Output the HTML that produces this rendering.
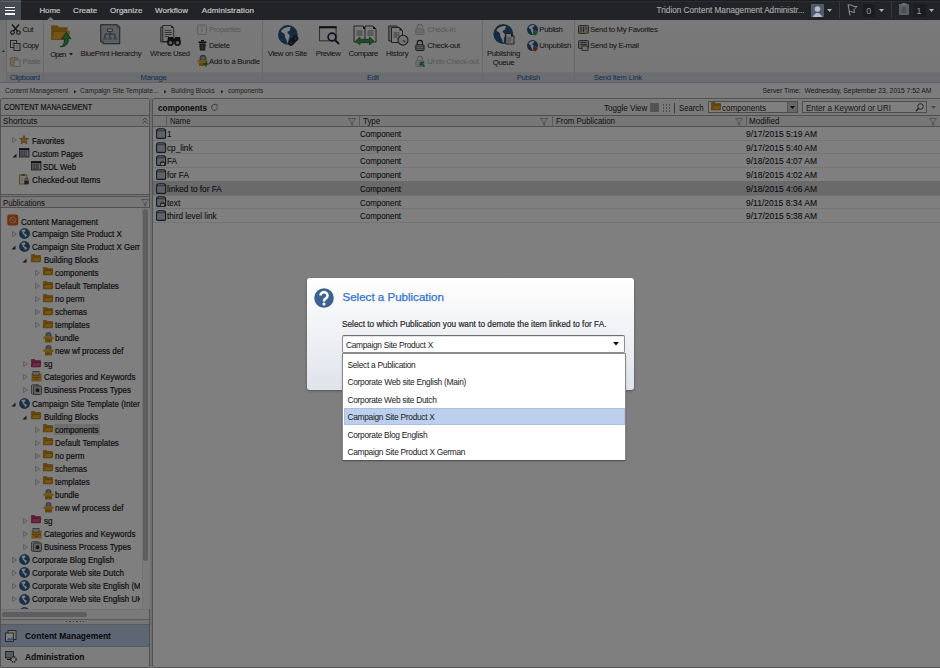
<!DOCTYPE html>
<html><head><meta charset="utf-8">
<style>
*{margin:0;padding:0;box-sizing:border-box}
html,body{width:940px;height:668px;overflow:hidden;background:#fff;font-family:"Liberation Sans",sans-serif;color:#222}
.a{position:absolute;white-space:nowrap}
svg.a{overflow:visible}
#top{left:0;top:0;width:940px;height:20px;background:#43464c}
</style></head><body>
<div class="a" style="left:0px;top:20px;width:940px;height:52px;background:linear-gradient(#f3f3f3,#eeeeee)"></div>
<div class="a" style="left:0px;top:72px;width:940px;height:10px;background:#d6dbe1;border-top:1px solid #dde1e6"></div>
<div class="a" style="left:0px;top:82px;width:940px;height:1px;background:#bfc3c8"></div>
<div class="a" style="left:0px;top:20px;width:7.3px;height:62px;background:#e6e6e6;border-right:1px solid #cfd2d6"></div>
<svg class="a" style="left:2px;top:50.3px" width="3" height="2" viewBox="0 0 3 2"><path d="M0 2 L1.5 0 L3 2z" fill="#555"/></svg>
<div class="a" style="left:43.3px;top:20px;width:1px;height:62px;background:#cdd1d6"></div>
<div class="a" style="left:262.2px;top:20px;width:1px;height:62px;background:#cdd1d6"></div>
<div class="a" style="left:482.4px;top:20px;width:1px;height:62px;background:#cdd1d6"></div>
<div class="a" style="left:573.9px;top:20px;width:1px;height:62px;background:#cdd1d6"></div>
<div class="a" style="left:10px;top:71.70px;line-height:12px;font-size:7.6px;color:#2a5d9f;font-weight:normal;letter-spacing:-0.316px;">Clipboard</div>
<div class="a" style="left:140.6px;top:71.70px;line-height:12px;font-size:7.6px;color:#2a5d9f;font-weight:normal;letter-spacing:-0.252px;">Manage</div>
<div class="a" style="left:367px;top:71.70px;line-height:12px;font-size:7.6px;color:#2a5d9f;font-weight:normal;letter-spacing:-0.365px;">Edit</div>
<div class="a" style="left:516.7px;top:71.70px;line-height:12px;font-size:7.6px;color:#2a5d9f;font-weight:normal;letter-spacing:-0.238px;">Publish</div>
<div class="a" style="left:593.8px;top:71.70px;line-height:12px;font-size:7.6px;color:#2a5d9f;font-weight:normal;letter-spacing:-0.192px;">Send Item Link</div>
<svg class="a" style="left:10px;top:24px" width="11" height="11" viewBox="0 0 11 11"><circle cx="2.5" cy="8.5" r="1.8" fill="none" stroke="#222" stroke-width="1.1"/><circle cx="8.5" cy="8.5" r="1.8" fill="none" stroke="#222" stroke-width="1.1"/><path d="M3.5 7 L9 0.5 M7.5 7 L2 0.5" stroke="#222" stroke-width="1.2"/></svg>
<div class="a" style="left:22.6px;top:24.30px;line-height:12px;font-size:7.8px;color:#1e1e1e;font-weight:normal;letter-spacing:-0.669px;">Cut</div>
<svg class="a" style="left:10px;top:40px" width="11" height="11" viewBox="0 0 11 11"><rect x="0.5" y="0.5" width="6" height="7" fill="#fff" stroke="#333" stroke-width="0.9"/><rect x="4" y="3.5" width="6" height="7" fill="#fff" stroke="#333" stroke-width="0.9"/><path d="M2 3h3M2 5h1.5M5.5 6h3M5.5 8h3" stroke="#555" stroke-width="0.6"/></svg>
<div class="a" style="left:22.6px;top:39.90px;line-height:12px;font-size:7.8px;color:#1e1e1e;font-weight:normal;letter-spacing:-0.603px;">Copy</div>
<svg class="a" style="left:10px;top:56px" width="11" height="11" viewBox="0 0 11 11"><rect x="0.5" y="1.5" width="7" height="8.5" rx="1" fill="#e8cfa0" stroke="#b9a37a" stroke-width="0.8"/><rect x="4" y="4" width="6" height="6.5" fill="#f4f4f4" stroke="#aaa" stroke-width="0.8"/></svg>
<div class="a" style="left:22.6px;top:55.90px;line-height:12px;font-size:7.8px;color:#b0b2b5;font-weight:normal;letter-spacing:-0.486px;">Paste</div>
<svg class="a" style="left:50.5px;top:24.5px" width="22" height="22" viewBox="0 0 22 22"><g transform="scale(0.5)"><path d="M1 1.5 h12 l3.5 3.5 h16 v24 h-31.5z" fill="#c98b1c" stroke="#9a6810" stroke-width="0.8"/><path d="M1 29 l5 -16 h32 l-5 16z" fill="#e6a52c" stroke="#9a6810" stroke-width="0.8"/><path d="M18 43.5 C26 42.5 27 35 26.5 27.5 L21 27.5 L30.5 14.5 L40 27.5 L34.5 27.5 C35.5 37 31 43.5 18 43.5 z" fill="#3a9a4c" stroke="#17602a" stroke-width="1.6"/></g></svg>
<div class="a" style="left:50.3px;top:49.00px;line-height:12px;font-size:7.8px;color:#1e1e1e;font-weight:normal;letter-spacing:-1.027px;">Open</div>
<svg class="a" style="left:68.5px;top:53px" width="4" height="3" viewBox="0 0 4 3"><path d="M0 0 L4 0 L2 2.5z" fill="#333"/></svg>
<svg class="a" style="left:100.3px;top:24px" width="22" height="21" viewBox="0 0 22 21"><g transform="scale(0.5)"><path d="M1.5 1.5 h33 l5 5 v33 h-33 l-5 -5z" fill="#b7c0cc" stroke="#2a2f36" stroke-width="1.8"/><path d="M34.5 1.5 v5 h5z" fill="#eee" stroke="#2a2f36" stroke-width="1.2"/><path d="M1.5 34.5 h5 v5z" fill="#eee" stroke="#2a2f36" stroke-width="1.2"/><rect x="15" y="10" width="10" height="5" fill="#f2f2f2" stroke="#2a2f36" stroke-width="1.3"/><path d="M20 15 v5 M10 26 v-6 h20 v6 M20 20 v6" fill="none" stroke="#2a2f36" stroke-width="1.3"/><path d="M7 30 l3 -4 l3 4z M17 30 l3 -4 l3 4z M27 30 l3 -4 l3 4z" fill="#f2f2f2" stroke="#2a2f36" stroke-width="1.2"/></g></svg>
<div class="a" style="left:80.6px;top:47.90px;line-height:12px;font-size:7.8px;color:#1e1e1e;font-weight:normal;letter-spacing:-0.333px;">BluePrint Hierarchy</div>
<svg class="a" style="left:160px;top:24.5px" width="22" height="22" viewBox="0 0 22 22"><g transform="scale(0.5)"><path d="M1.5 4 h17 l6 6 v24 h-23z" fill="#c8c8c8" stroke="#333" stroke-width="1.6"/><path d="M5.5 1 h17 l5 5 v27 h-22z" fill="#ececec" stroke="#333" stroke-width="1.6"/><path d="M22.5 1 v5 h5z" fill="#222"/><path d="M9.5 11h13M9.5 15h14M9.5 19h14M9.5 23h8" stroke="#444" stroke-width="1.6"/><path d="M16 24 h10 l1 8 h-12z M30 24 h10 l1 8 h-12z" fill="#222"/><circle cx="21" cy="35" r="6.8" fill="#222"/><circle cx="35" cy="35" r="6.8" fill="#222"/><circle cx="21" cy="35.5" r="3.6" fill="#bbb"/><circle cx="35" cy="35.5" r="3.6" fill="#bbb"/><rect x="25" y="27" width="6" height="6" fill="#222"/></g></svg>
<div class="a" style="left:150px;top:47.80px;line-height:12px;font-size:7.8px;color:#1e1e1e;font-weight:normal;letter-spacing:-0.372px;">Where Used</div>
<svg class="a" style="left:197px;top:24px" width="10" height="11" viewBox="0 0 10 11"><rect x="0.5" y="1" width="9" height="9.5" rx="1" fill="#eee" stroke="#b5b9be" stroke-width="0.9"/><rect x="3" y="0.3" width="4" height="2" fill="#ccc"/><path d="M5 4v4" stroke="#b5b9be" stroke-width="1"/></svg>
<div class="a" style="left:209px;top:24.30px;line-height:12px;font-size:7.8px;color:#b0b2b5;font-weight:normal;letter-spacing:-0.394px;">Properties</div>
<svg class="a" style="left:198px;top:40px" width="9" height="11" viewBox="0 0 9 11"><rect x="0.5" y="1.5" width="8" height="1.5" fill="#222"/><rect x="3" y="0" width="3" height="1.5" fill="#222"/><path d="M1.3 3.5 h6.4 l-0.6 7 h-5.2z" fill="#222"/><path d="M3 4.5v5M4.5 4.5v5M6 4.5v5" stroke="#aaa" stroke-width="0.5"/></svg>
<div class="a" style="left:209px;top:39.90px;line-height:12px;font-size:7.8px;color:#1e1e1e;font-weight:normal;letter-spacing:-0.309px;">Delete</div>
<svg class="a" style="left:196.5px;top:55px" width="12" height="12" viewBox="0 0 12 12"><g transform="scale(0.5)"><path d="M6 10 v-5 a6 4.5 0 0 1 12 0 v5" fill="#8c8c8c" stroke="#444" stroke-width="1.4"/><path d="M9 5h6M9 7.5h6" stroke="#ddd" stroke-width="0.9"/><rect x="1" y="10" width="20" height="5" rx="1" fill="#e6a52c"/><rect x="4" y="15" width="14" height="7" fill="#d4951f"/><path d="M4 18h14" stroke="#a06d12" stroke-width="1"/><path d="M18 13 v10 M13 18 h10" stroke="#128a3a" stroke-width="3"/></g></svg>
<div class="a" style="left:209px;top:55.60px;line-height:12px;font-size:7.8px;color:#1e1e1e;font-weight:normal;letter-spacing:-0.322px;">Add to a Bundle</div>
<svg class="a" style="left:278px;top:24.8px" width="22" height="21" viewBox="0 0 22 21"><circle cx="9.9" cy="9.9" r="9.85" fill="#2b5784"/><path d="M3 6.5 C4.5 3 9 1.5 13 2 C12.5 3 11.5 4 12 5.5 C10.5 6 9 6.5 9.5 8 L11.5 10 C12 11.5 11 13 10.5 14.5 L10.5 18.5 L9.5 18.5 C9 16.5 8.5 14.5 7.5 13 C6.5 11.5 7 10 6.5 9 C5.5 8 4 7.5 3 6.5 Z" fill="#fff"/><g transform="rotate(-45 15.5 15.5)" fill="none" stroke="#222" stroke-width="1.5"><rect x="10" y="13.5" width="6" height="4" rx="2"/><rect x="14.5" y="13.5" width="6" height="4" rx="2"/></g></svg>
<div class="a" style="left:267.7px;top:47.80px;line-height:12px;font-size:7.8px;color:#1e1e1e;font-weight:normal;letter-spacing:-0.329px;">View on Site</div>
<svg class="a" style="left:318.5px;top:25.5px" width="22" height="21" viewBox="0 0 22 21"><rect x="0.6" y="0.8" width="16.5" height="14" fill="#f0f0f0" stroke="#444" stroke-width="0.9"/><rect x="0.2" y="0.3" width="17.3" height="2" fill="#222"/><circle cx="13" cy="11" r="3.9" fill="#f0f0f0" stroke="#1c2340" stroke-width="1.7"/><path d="M15.8 13.8 L20 18" stroke="#1c2340" stroke-width="1.9"/></svg>
<div class="a" style="left:315.8px;top:47.80px;line-height:12px;font-size:7.8px;color:#1e1e1e;font-weight:normal;letter-spacing:-0.440px;">Preview</div>
<svg class="a" style="left:352.5px;top:24.8px" width="24" height="21" viewBox="0 0 24 21"><path d="M1 1 h9 l3 3 v13 h-12z" fill="#f4f4f4" stroke="#333" stroke-width="0.9"/><path d="M10 1 v3 h3z" fill="#222"/><path d="M12 1 h8 l3 3 v13 h-11z" fill="#f4f4f4" stroke="#333" stroke-width="0.9"/><path d="M20 1 v3 h3z" fill="#222"/><path d="M3.5 6h6M3.5 8h6M3.5 10h6M14.5 6h6M14.5 8h6M14.5 10h6" stroke="#555" stroke-width="0.8"/><path d="M2.5 16 l4.5 -4 v2.3 h9.5 v-2.3 l4.5 4 l-4.5 4 v-2.3 h-9.5 v2.3z" fill="#3a9a4c" stroke="#1d6a30" stroke-width="0.7"/></svg>
<div class="a" style="left:348.5px;top:47.80px;line-height:12px;font-size:7.8px;color:#1e1e1e;font-weight:normal;letter-spacing:-0.380px;">Compare</div>
<svg class="a" style="left:388px;top:24.8px" width="22" height="21" viewBox="0 0 22 21"><path d="M0.8 1 h8 l3 3 v12 h-11z" fill="#ccc" stroke="#333" stroke-width="0.9"/><path d="M3.5 2.5 h8 l3 3 v12 h-11z" fill="#f4f4f4" stroke="#333" stroke-width="0.9"/><path d="M11.5 2.5 v3 h3z" fill="#222"/><path d="M5.5 8h6M5.5 10h6M5.5 12h4" stroke="#555" stroke-width="0.8"/><circle cx="15" cy="15.2" r="5" fill="#e4e4e4" stroke="#333" stroke-width="1.1"/><path d="M15 15.2 L17.3 17" stroke="#c0392b" stroke-width="1.2"/></svg>
<div class="a" style="left:386px;top:47.80px;line-height:12px;font-size:7.8px;color:#1e1e1e;font-weight:normal;letter-spacing:-0.278px;">History</div>
<svg class="a" style="left:415.4px;top:24px" width="11" height="11" viewBox="0 0 11 11"><path d="M2.3 4.8 v-1.8 a2.6 2.6 0 0 1 5.2 0 v0.6" fill="none" stroke="#b0b4b8" stroke-width="1.1"/><rect x="0.8" y="4.8" width="8.2" height="5.7" rx="0.8" fill="#e2e2e2" stroke="#b0b4b8" stroke-width="0.9"/><path d="M1.5 6.8h6.8M1.5 8.6h6.8" stroke="#b0b4b8" stroke-width="0.5"/></svg>
<div class="a" style="left:427.2px;top:24.35px;line-height:12px;font-size:7.8px;color:#b0b2b5;font-weight:normal;letter-spacing:-0.339px;">Check-in</div>
<svg class="a" style="left:415.4px;top:40px" width="11" height="11" viewBox="0 0 11 11"><path d="M2.3 4.8 v-1.8 a2.6 2.6 0 0 1 5.2 0 v1.8" fill="none" stroke="#1e1e1e" stroke-width="1.1"/><rect x="0.8" y="4.8" width="8.2" height="5.7" rx="0.8" fill="#c8c8c8" stroke="#1e1e1e" stroke-width="0.9"/><path d="M1.5 6.8h6.8M1.5 8.6h6.8" stroke="#1e1e1e" stroke-width="0.5"/></svg>
<div class="a" style="left:427.2px;top:40.10px;line-height:12px;font-size:7.8px;color:#1e1e1e;font-weight:normal;letter-spacing:-0.306px;">Check-out</div>
<svg class="a" style="left:415.4px;top:56px" width="11" height="11" viewBox="0 0 11 11"><path d="M2.3 4.8 v-1.8 a2.6 2.6 0 0 1 5.2 0 v1.8" fill="none" stroke="#b0b4b8" stroke-width="1.1"/><rect x="0.8" y="4.8" width="8.2" height="5.7" rx="0.8" fill="#e2e2e2" stroke="#b0b4b8" stroke-width="0.9"/><path d="M1.5 6.8h6.8M1.5 8.6h6.8" stroke="#b0b4b8" stroke-width="0.5"/><path d="M5.5 6.5 L9.5 10.5 M5.5 6.5 v3.5 M5.5 6.5 h3.5" stroke="#2e8a4e" stroke-width="1.6" fill="none"/></svg>
<div class="a" style="left:427.2px;top:55.60px;line-height:12px;font-size:7.8px;color:#b0b2b5;font-weight:normal;letter-spacing:-0.328px;">Undo Check-out</div>
<svg class="a" style="left:493.3px;top:24.3px" width="22" height="21" viewBox="0 0 22 21"><circle cx="10.3" cy="10" r="9.9" fill="#2b5784"/><g transform="translate(0.3 0)"><path d="M3 6.5 C4.5 3 9 1.5 13 2 C12.5 3 11.5 4 12 5.5 C10.5 6 9 6.5 9.5 8 L11.5 10 C12 11.5 11 13 10.5 14.5 L10.5 18.5 L9.5 18.5 C9 16.5 8.5 14.5 7.5 13 C6.5 11.5 7 10 6.5 9 C5.5 8 4 7.5 3 6.5 Z" fill="#fff"/></g><path d="M12.8 9.5 h5.2 l3 3 v7.5 h-8.2z" fill="#e8e8e8" stroke="#333" stroke-width="0.9"/><path d="M18 9.5 v3 h3z" fill="#222"/><path d="M14.5 14h4M14.5 16h4M14.5 18h3" stroke="#555" stroke-width="0.7"/></svg>
<div class="a" style="left:486.9px;top:47.50px;line-height:12px;font-size:7.8px;color:#1e1e1e;font-weight:normal;letter-spacing:-0.288px;">Publishing</div>
<div class="a" style="left:492.8px;top:56.60px;line-height:12px;font-size:7.8px;color:#1e1e1e;font-weight:normal;letter-spacing:-0.429px;">Queue</div>
<svg class="a" style="left:526.6px;top:24px" width="12" height="12" viewBox="0 0 12 12"><g transform="scale(0.56)"><circle cx="9.9" cy="9.9" r="9.85" fill="#2b5784"/><path d="M3 6.5 C4.5 3 9 1.5 13 2 C12.5 3 11.5 4 12 5.5 C10.5 6 9 6.5 9.5 8 L11.5 10 C12 11.5 11 13 10.5 14.5 L10.5 18.5 L9.5 18.5 C9 16.5 8.5 14.5 7.5 13 C6.5 11.5 7 10 6.5 9 C5.5 8 4 7.5 3 6.5 Z" fill="#fff"/></g><path d="M8.3 6.3 l2.7 2.7 l-2.7 2.7 l-2.7 -2.7z" fill="#2d9c4a" stroke="#ddd" stroke-width="0.4"/></svg>
<div class="a" style="left:539.3px;top:24.35px;line-height:12px;font-size:7.8px;color:#1e1e1e;font-weight:normal;letter-spacing:-0.347px;">Publish</div>
<svg class="a" style="left:526.6px;top:40px" width="12" height="12" viewBox="0 0 12 12"><g transform="scale(0.56)"><circle cx="9.9" cy="9.9" r="9.85" fill="#2b5784"/><path d="M3 6.5 C4.5 3 9 1.5 13 2 C12.5 3 11.5 4 12 5.5 C10.5 6 9 6.5 9.5 8 L11.5 10 C12 11.5 11 13 10.5 14.5 L10.5 18.5 L9.5 18.5 C9 16.5 8.5 14.5 7.5 13 C6.5 11.5 7 10 6.5 9 C5.5 8 4 7.5 3 6.5 Z" fill="#fff"/></g><path d="M8.3 6.3 l2.7 2.7 l-2.7 2.7 l-2.7 -2.7z" fill="#c0392b" stroke="#ddd" stroke-width="0.4"/></svg>
<div class="a" style="left:539.3px;top:40.10px;line-height:12px;font-size:7.8px;color:#1e1e1e;font-weight:normal;letter-spacing:-0.336px;">Unpublish</div>
<svg class="a" style="left:577.6px;top:24.5px" width="11" height="10" viewBox="0 0 11 10"><rect x="0.5" y="0.5" width="10" height="8" rx="1" fill="#bbb" stroke="#333" stroke-width="0.8"/><path d="M3 2v5M5.5 2v5M8 2v3" stroke="#333" stroke-width="0.8"/><circle cx="8.5" cy="7.5" r="1.6" fill="#e6a020"/></svg>
<div class="a" style="left:590px;top:24.35px;line-height:12px;font-size:7.8px;color:#1e1e1e;font-weight:normal;letter-spacing:-0.310px;">Send to My Favorites</div>
<svg class="a" style="left:577.6px;top:40px" width="11" height="11" viewBox="0 0 11 11"><rect x="0.5" y="0.5" width="10" height="8" rx="1" fill="#bbb" stroke="#333" stroke-width="0.8"/><path d="M2.5 2.5h6M2.5 4.5h6" stroke="#333" stroke-width="0.7"/><rect x="4" y="6" width="6" height="4.5" fill="#ddd" stroke="#333" stroke-width="0.7"/></svg>
<div class="a" style="left:590px;top:39.80px;line-height:12px;font-size:7.8px;color:#1e1e1e;font-weight:normal;letter-spacing:-0.299px;">Send by E-mail</div>
<div class="a" style="left:0px;top:83px;width:940px;height:585px;background:#f9f9f9"></div>
<div class="a" style="left:5.3px;top:84.94px;line-height:12px;font-size:7.4px;color:#444;font-weight:normal;transform:scaleX(0.8881);transform-origin:0 0;">Content Management</div>
<svg class="a" style="left:73.8px;top:89.8px" width="2.5" height="3.5" viewBox="0 0 2.5 3.5"><path d="M0 0 L2.5 1.75 L0 3.5z" fill="#444"/></svg>
<div class="a" style="left:80.4px;top:84.94px;line-height:12px;font-size:7.4px;color:#444;font-weight:normal;transform:scaleX(0.9071);transform-origin:0 0;">Campaign Site Template...</div>
<svg class="a" style="left:164.10000000000002px;top:89.8px" width="2.5" height="3.5" viewBox="0 0 2.5 3.5"><path d="M0 0 L2.5 1.75 L0 3.5z" fill="#444"/></svg>
<div class="a" style="left:171.4px;top:84.94px;line-height:12px;font-size:7.4px;color:#444;font-weight:normal;transform:scaleX(0.8709);transform-origin:0 0;">Building Blocks</div>
<svg class="a" style="left:220.60000000000002px;top:89.8px" width="2.5" height="3.5" viewBox="0 0 2.5 3.5"><path d="M0 0 L2.5 1.75 L0 3.5z" fill="#444"/></svg>
<div class="a" style="left:227.6px;top:84.94px;line-height:12px;font-size:7.4px;color:#444;font-weight:normal;transform:scaleX(0.8757);transform-origin:0 0;">components</div>
<div class="a" style="left:762.4px;top:85.00px;line-height:12px;font-size:6.78px;color:#333;font-weight:normal;">Server Time:&nbsp; Wednesday, September 23, 2015 7:52 AM</div>
<div class="a" style="left:0px;top:98.2px;width:150.3px;height:569.8px;background:#fff;border:1px solid #a4a4a4;border-radius:2px"></div>
<div class="a" style="left:150.3px;top:98px;width:2px;height:570px;background:#dedede"></div>
<div class="a" style="left:1px;top:99.2px;width:148.3px;height:17px;background:#f4f4f4;border-bottom:1px solid #a0a0a0;border-radius:2px 2px 0 0"></div>
<div class="a" style="left:3.8px;top:101.96px;line-height:12px;font-size:8.2px;color:#1a1a1a;font-weight:normal;transform:scaleX(0.8783);transform-origin:0 0;-webkit-text-stroke:0.15px #1a1a1a">CONTENT MANAGEMENT</div>
<div class="a" style="left:1px;top:116.2px;width:148.3px;height:10.8px;background:#efefef;border-bottom:1px solid #a0a0a0"></div>
<div class="a" style="left:3px;top:115.29px;line-height:12px;font-size:8.4px;color:#222;font-weight:normal;transform:scaleX(0.9695);transform-origin:0 0;">Shortcuts</div>
<svg class="a" style="left:141.5px;top:117px" width="6" height="8" viewBox="0 0 6 8"><path d="M0.5 3.5 L3 1 L5.5 3.5 M0.5 6.5 L3 4 L5.5 6.5" fill="none" stroke="#666" stroke-width="0.8"/></svg>
<svg class="a" style="left:12.3px;top:137.4px" width="5" height="6" viewBox="0 0 5 6"><path d="M0.6 0.5 L4.4 3 L0.6 5.5z" fill="none" stroke="#a8a8a8" stroke-width="0.8"/></svg>
<svg class="a" style="left:19.3px;top:134.8px" width="10" height="9.5" viewBox="0 0 10 9.5"><path d="M5 0.3 L6.4 3.3 L9.7 3.5 L7.1 5.6 L8 8.9 L5 7 L2 8.9 L2.9 5.6 L0.3 3.5 L3.6 3.3z" fill="#e3a22c" stroke="#8a5a10" stroke-width="0.5"/></svg>
<div class="a" style="left:31.6px;top:134.75px;line-height:12px;font-size:8.8px;color:#1a1a1a;font-weight:normal;transform:scaleX(0.8981);transform-origin:0 0;-webkit-text-stroke:0.2px #1a1a1a">Favorites</div>
<svg class="a" style="left:11.8px;top:152.8px" width="5" height="5" viewBox="0 0 5 5"><path d="M4.5 0.5 L4.5 4.5 L0.5 4.5z" fill="#333"/></svg>
<svg class="a" style="left:19px;top:148.2px" width="11" height="10" viewBox="0 0 11 10"><g transform="scale(0.5)"><rect x="1" y="1" width="19" height="17" fill="#a4adb8" stroke="#222" stroke-width="1.4"/><rect x="1" y="1" width="19" height="3" fill="#222"/><path d="M4 7h4v3h-4zM11 7h4v3h-4zM4 12h4v3h-4zM11 12h4v3h-4z" fill="none" stroke="#222" stroke-width="1" stroke-dasharray="1 1"/><path d="M17 6v10" stroke="#eee" stroke-width="1"/></g></svg>
<div class="a" style="left:31.6px;top:147.80px;line-height:12px;font-size:8.8px;color:#1a1a1a;font-weight:normal;transform:scaleX(0.8837);transform-origin:0 0;-webkit-text-stroke:0.2px #1a1a1a">Custom Pages</div>
<svg class="a" style="left:31px;top:160.8px" width="11" height="10" viewBox="0 0 11 10"><g transform="scale(0.5)"><rect x="1" y="1" width="19" height="17" fill="#a4adb8" stroke="#222" stroke-width="1.4"/><rect x="1" y="1" width="19" height="3" fill="#222"/><path d="M4 7h4v3h-4zM11 7h4v3h-4zM4 12h4v3h-4zM11 12h4v3h-4z" fill="none" stroke="#222" stroke-width="1" stroke-dasharray="1 1"/><path d="M17 6v10" stroke="#eee" stroke-width="1"/></g></svg>
<div class="a" style="left:43px;top:160.55px;line-height:12px;font-size:8.8px;color:#1a1a1a;font-weight:normal;transform:scaleX(0.8878);transform-origin:0 0;-webkit-text-stroke:0.2px #1a1a1a">SDL Web</div>
<svg class="a" style="left:19px;top:173.6px" width="11" height="11" viewBox="0 0 11 11"><g transform="scale(0.5)"><rect x="1" y="2" width="15" height="18" fill="#f0f0f0" stroke="#c98f1c" stroke-width="2"/><rect x="5" y="0.5" width="7" height="3" fill="#555"/><path d="M6 6v11" stroke="#5aa0c0" stroke-width="1"/><path d="M12 13 v-2 a3 3 0 0 1 6 0 v2" fill="none" stroke="#333" stroke-width="1.3"/><rect x="10.5" y="13" width="9" height="7.5" fill="#444"/></g></svg>
<div class="a" style="left:31.6px;top:173.85px;line-height:12px;font-size:8.8px;color:#1a1a1a;font-weight:normal;transform:scaleX(0.9262);transform-origin:0 0;-webkit-text-stroke:0.2px #1a1a1a">Checked-out Items</div>
<div class="a" style="left:1px;top:193.7px;width:148.3px;height:3.2px;background:#e8e8e8;border-top:1px solid #a8a8a8;border-bottom:1px solid #a8a8a8"></div>
<div class="a" style="left:1px;top:196.9px;width:148.3px;height:11px;background:#f0f0f0;border-bottom:1px solid #a0a0a0"></div>
<div class="a" style="left:3px;top:196.59px;line-height:12px;font-size:8.4px;color:#222;font-weight:normal;transform:scaleX(0.9273);transform-origin:0 0;">Publications</div>
<svg class="a" style="left:141px;top:198.5px" width="8" height="8" viewBox="0 0 8 8"><path d="M0.5 0.5 h7 l-2.8 3.5 v3.5 l-1.4 -1 v-2.5z" fill="none" stroke="#888" stroke-width="0.7"/></svg>
<div class="a" style="left:141.5px;top:207.8px;width:8.3px;height:401.5px;background:#f4f4f4;border-left:1px solid #e6e6e6"></div>
<div class="a" style="left:142.6px;top:209.3px;width:5.6px;height:352px;background:#bdbdbd;border-radius:2.8px"></div>
<div class="a" style="left:1px;top:609.3px;width:148.3px;height:9.5px;background:#f4f4f4;border-top:1px solid #e6e6e6"></div>
<div class="a" style="left:2.2px;top:611.8px;width:84.8px;height:5px;background:#bdbdbd;border-radius:2.5px"></div>
<div class="a" style="left:1px;top:618.5px;width:148px;height:6px;background:#ececec;border-top:1px solid #b5b5b5;border-bottom:1px solid #b5b5b5"></div>
<div class="a" style="left:66.0px;top:620.8px;width:1.4px;height:1.4px;background:#777"></div>
<div class="a" style="left:69.4px;top:620.8px;width:1.4px;height:1.4px;background:#777"></div>
<div class="a" style="left:72.8px;top:620.8px;width:1.4px;height:1.4px;background:#777"></div>
<div class="a" style="left:76.2px;top:620.8px;width:1.4px;height:1.4px;background:#777"></div>
<div class="a" style="left:79.6px;top:620.8px;width:1.4px;height:1.4px;background:#777"></div>
<div class="a" style="left:83.0px;top:620.8px;width:1.4px;height:1.4px;background:#777"></div>
<div class="a" style="left:1px;top:624.5px;width:148px;height:22px;background:#bccce6;border-bottom:1px solid #a9b3c2"></div>
<svg class="a" style="left:4.5px;top:629.5px" width="12" height="12" viewBox="0 0 12 12"><rect x="3" y="0.5" width="8" height="9" fill="#f4f4f4" stroke="#333" stroke-width="0.8"/><rect x="0.5" y="3" width="8" height="8.5" fill="#fff" stroke="#333" stroke-width="0.8"/><path d="M1.5 10.5 l2.5 -3 l1.5 1.5 l2 -2.5 v4z" fill="#5aa0d0"/></svg>
<div class="a" style="left:24.5px;top:629.81px;line-height:12px;font-size:9.2px;color:#111;font-weight:bold;transform:scaleX(0.9195);transform-origin:0 0;">Content Management</div>
<div class="a" style="left:1px;top:646.5px;width:148.3px;height:20.5px;background:#fafafa"></div>
<svg class="a" style="left:4.5px;top:651px" width="12" height="12" viewBox="0 0 12 12"><rect x="0.5" y="0.5" width="8" height="6.5" fill="#aab6c4" stroke="#333" stroke-width="0.8"/><path d="M2 8.5 h5" stroke="#333" stroke-width="1"/><circle cx="8.5" cy="8.5" r="2.6" fill="#fff" stroke="#333" stroke-width="1.3" stroke-dasharray="1.3 0.8"/></svg>
<div class="a" style="left:24.5px;top:651.21px;line-height:12px;font-size:9.2px;color:#111;font-weight:bold;transform:scaleX(0.9167);transform-origin:0 0;">Administration</div>
<div class="a" style="left:1px;top:208.5px;width:139px;height:400.8px;overflow:hidden">
<svg class="a" style="left:6px;top:5.400000000000006px" width="12" height="12" viewBox="0 0 12 12"><g transform="scale(0.5)"><rect x="0.5" y="1" width="22" height="22" rx="4" fill="#dc6421"/><circle cx="11.5" cy="12" r="6" fill="none" stroke="#f3c9a8" stroke-width="1.6"/><path d="M8 9 l7 6" stroke="#f3c9a8" stroke-width="1.4"/></g></svg>
<div class="a" style="left:20px;top:7.05px;line-height:12px;font-size:8.8px;transform:scaleX(0.909);transform-origin:0 0;color:#1a1a1a;-webkit-text-stroke:0.2px #1a1a1a">Content Management</div>
<svg class="a" style="left:10.5px;top:22.30000000000001px" width="5" height="6" viewBox="0 0 5 6"><path d="M0.6 0.5 L4.4 3 L0.6 5.5z" fill="none" stroke="#a8a8a8" stroke-width="0.8"/></svg>
<svg class="a" style="left:18px;top:19.599999999999994px" width="11" height="11" viewBox="0 0 11 11"><g transform="scale(0.5)"><circle cx="11" cy="11" r="10.8" fill="#33628f"/><path d="M4.8 4.6 C7 3.2 10.5 2.6 12.8 3.3 L12.4 6.8 L9.6 8.8 L11.6 11.6 L15 13 L15.9 14.3 L12.6 18.8 L10.8 14.6 L7.4 11.2 L6.9 8 L5.4 6.3 Z" fill="#fff"/></g></svg>
<div class="a" style="left:30.6px;top:19.35px;line-height:12px;font-size:8.8px;transform:scaleX(0.909);transform-origin:0 0;color:#1a1a1a;-webkit-text-stroke:0.2px #1a1a1a">Campaign Site Product X</div>
<svg class="a" style="left:9.9px;top:36.75000000000002px" width="5" height="5" viewBox="0 0 5 5"><path d="M4.5 0.5 L4.5 4.5 L0.5 4.5z" fill="#333"/></svg>
<svg class="a" style="left:18px;top:32.650000000000006px" width="11" height="11" viewBox="0 0 11 11"><g transform="scale(0.5)"><circle cx="11" cy="11" r="10.8" fill="#33628f"/><path d="M4.8 4.6 C7 3.2 10.5 2.6 12.8 3.3 L12.4 6.8 L9.6 8.8 L11.6 11.6 L15 13 L15.9 14.3 L12.6 18.8 L10.8 14.6 L7.4 11.2 L6.9 8 L5.4 6.3 Z" fill="#fff"/></g></svg>
<div class="a" style="left:30.6px;top:32.40px;line-height:12px;font-size:8.8px;transform:scaleX(0.909);transform-origin:0 0;color:#1a1a1a;-webkit-text-stroke:0.2px #1a1a1a">Campaign Site Product X German</div>
<svg class="a" style="left:21.4px;top:49.799999999999976px" width="5" height="5" viewBox="0 0 5 5"><path d="M4.5 0.5 L4.5 4.5 L0.5 4.5z" fill="#333"/></svg>
<svg class="a" style="left:30px;top:45.900000000000006px" width="10.5" height="8.5" viewBox="0 0 10.5 8.5"><g transform="scale(0.5)"><path d="M0.8 1 h6.5 l2 2.2 h9.7 v12.3 h-18.2z" fill="#c98e18" stroke="#9a6a0c" stroke-width="1"/><path d="M0.8 15.5 l3.2 -8.5 h16 l-3.2 8.5z" fill="#eaa928" stroke="#9a6a0c" stroke-width="1"/></g></svg>
<div class="a" style="left:42.5px;top:45.45px;line-height:12px;font-size:8.8px;transform:scaleX(0.909);transform-origin:0 0;color:#1a1a1a;-webkit-text-stroke:0.2px #1a1a1a">Building Blocks</div>
<svg class="a" style="left:34px;top:61.44999999999999px" width="5" height="6" viewBox="0 0 5 6"><path d="M0.6 0.5 L4.4 3 L0.6 5.5z" fill="none" stroke="#a8a8a8" stroke-width="0.8"/></svg>
<svg class="a" style="left:42px;top:58.94999999999999px" width="10.5" height="8.5" viewBox="0 0 10.5 8.5"><g transform="scale(0.5)"><path d="M0.8 1 h6.5 l2 2.2 h9.7 v12.3 h-18.2z" fill="#c98e18" stroke="#9a6a0c" stroke-width="1"/><path d="M0.8 15.5 l3.2 -8.5 h16 l-3.2 8.5z" fill="#eaa928" stroke="#9a6a0c" stroke-width="1"/></g></svg>
<div class="a" style="left:54px;top:58.50px;line-height:12px;font-size:8.8px;transform:scaleX(0.909);transform-origin:0 0;color:#1a1a1a;-webkit-text-stroke:0.2px #1a1a1a">components</div>
<svg class="a" style="left:34px;top:74.5px" width="5" height="6" viewBox="0 0 5 6"><path d="M0.6 0.5 L4.4 3 L0.6 5.5z" fill="none" stroke="#a8a8a8" stroke-width="0.8"/></svg>
<svg class="a" style="left:42px;top:72.0px" width="10.5" height="8.5" viewBox="0 0 10.5 8.5"><g transform="scale(0.5)"><path d="M0.8 1 h6.5 l2 2.2 h9.7 v12.3 h-18.2z" fill="#c98e18" stroke="#9a6a0c" stroke-width="1"/><path d="M0.8 15.5 l3.2 -8.5 h16 l-3.2 8.5z" fill="#eaa928" stroke="#9a6a0c" stroke-width="1"/></g></svg>
<div class="a" style="left:54px;top:71.55px;line-height:12px;font-size:8.8px;transform:scaleX(0.909);transform-origin:0 0;color:#1a1a1a;-webkit-text-stroke:0.2px #1a1a1a">Default Templates</div>
<svg class="a" style="left:34px;top:87.54999999999995px" width="5" height="6" viewBox="0 0 5 6"><path d="M0.6 0.5 L4.4 3 L0.6 5.5z" fill="none" stroke="#a8a8a8" stroke-width="0.8"/></svg>
<svg class="a" style="left:42px;top:85.04999999999995px" width="10.5" height="8.5" viewBox="0 0 10.5 8.5"><g transform="scale(0.5)"><path d="M0.8 1 h6.5 l2 2.2 h9.7 v12.3 h-18.2z" fill="#c98e18" stroke="#9a6a0c" stroke-width="1"/><path d="M0.8 15.5 l3.2 -8.5 h16 l-3.2 8.5z" fill="#eaa928" stroke="#9a6a0c" stroke-width="1"/></g></svg>
<div class="a" style="left:54px;top:84.60px;line-height:12px;font-size:8.8px;transform:scaleX(0.909);transform-origin:0 0;color:#1a1a1a;-webkit-text-stroke:0.2px #1a1a1a">no perm</div>
<svg class="a" style="left:34px;top:100.60000000000002px" width="5" height="6" viewBox="0 0 5 6"><path d="M0.6 0.5 L4.4 3 L0.6 5.5z" fill="none" stroke="#a8a8a8" stroke-width="0.8"/></svg>
<svg class="a" style="left:42px;top:98.10000000000002px" width="10.5" height="8.5" viewBox="0 0 10.5 8.5"><g transform="scale(0.5)"><path d="M0.8 1 h6.5 l2 2.2 h9.7 v12.3 h-18.2z" fill="#c98e18" stroke="#9a6a0c" stroke-width="1"/><path d="M0.8 15.5 l3.2 -8.5 h16 l-3.2 8.5z" fill="#eaa928" stroke="#9a6a0c" stroke-width="1"/></g></svg>
<div class="a" style="left:54px;top:97.65px;line-height:12px;font-size:8.8px;transform:scaleX(0.909);transform-origin:0 0;color:#1a1a1a;-webkit-text-stroke:0.2px #1a1a1a">schemas</div>
<svg class="a" style="left:34px;top:113.64999999999998px" width="5" height="6" viewBox="0 0 5 6"><path d="M0.6 0.5 L4.4 3 L0.6 5.5z" fill="none" stroke="#a8a8a8" stroke-width="0.8"/></svg>
<svg class="a" style="left:42px;top:111.14999999999998px" width="10.5" height="8.5" viewBox="0 0 10.5 8.5"><g transform="scale(0.5)"><path d="M0.8 1 h6.5 l2 2.2 h9.7 v12.3 h-18.2z" fill="#c98e18" stroke="#9a6a0c" stroke-width="1"/><path d="M0.8 15.5 l3.2 -8.5 h16 l-3.2 8.5z" fill="#eaa928" stroke="#9a6a0c" stroke-width="1"/></g></svg>
<div class="a" style="left:54px;top:110.70px;line-height:12px;font-size:8.8px;transform:scaleX(0.909);transform-origin:0 0;color:#1a1a1a;-webkit-text-stroke:0.2px #1a1a1a">templates</div>
<svg class="a" style="left:42px;top:123.60000000000002px" width="11" height="11" viewBox="0 0 11 11"><g transform="scale(0.5)"><path d="M6 9 v-4 a5 4 0 0 1 10 0 v4" fill="#8a8a8a" stroke="#444" stroke-width="1.3"/><path d="M8.5 6h5M8.5 3.5h5" stroke="#ddd" stroke-width="0.8"/><rect x="1" y="9" width="20" height="5" rx="1" fill="#e6a52c"/><rect x="4" y="14" width="14" height="7" fill="#d4951f"/><path d="M4 17h14" stroke="#a06d12" stroke-width="1"/></g></svg>
<div class="a" style="left:54px;top:123.75px;line-height:12px;font-size:8.8px;transform:scaleX(0.909);transform-origin:0 0;color:#1a1a1a;-webkit-text-stroke:0.2px #1a1a1a">bundle</div>
<svg class="a" style="left:42px;top:136.65000000000003px" width="11" height="11" viewBox="0 0 11 11"><g transform="scale(0.5)"><path d="M6 9 v-4 a5 4 0 0 1 10 0 v4" fill="#8a8a8a" stroke="#444" stroke-width="1.3"/><path d="M8.5 6h5M8.5 3.5h5" stroke="#ddd" stroke-width="0.8"/><rect x="1" y="9" width="20" height="5" rx="1" fill="#e6a52c"/><rect x="4" y="14" width="14" height="7" fill="#d4951f"/><path d="M4 17h14" stroke="#a06d12" stroke-width="1"/></g></svg>
<div class="a" style="left:54px;top:136.80px;line-height:12px;font-size:8.8px;transform:scaleX(0.909);transform-origin:0 0;color:#1a1a1a;-webkit-text-stroke:0.2px #1a1a1a">new wf process def</div>
<svg class="a" style="left:22px;top:152.79999999999995px" width="5" height="6" viewBox="0 0 5 6"><path d="M0.6 0.5 L4.4 3 L0.6 5.5z" fill="none" stroke="#a8a8a8" stroke-width="0.8"/></svg>
<svg class="a" style="left:30px;top:150.29999999999995px" width="10.5" height="8.5" viewBox="0 0 10.5 8.5"><g transform="scale(0.5)"><path d="M0.8 1 h6.5 l2 2.2 h9.7 v12.3 h-18.2z" fill="#c03a70" stroke="#8a1c48" stroke-width="1"/><path d="M0.8 15.5 l3.2 -8.5 h16 l-3.2 8.5z" fill="#e0508a" stroke="#8a1c48" stroke-width="1"/></g></svg>
<div class="a" style="left:42.5px;top:149.85px;line-height:12px;font-size:8.8px;transform:scaleX(0.909);transform-origin:0 0;color:#1a1a1a;-webkit-text-stroke:0.2px #1a1a1a">sg</div>
<svg class="a" style="left:22px;top:165.85000000000002px" width="5" height="6" viewBox="0 0 5 6"><path d="M0.6 0.5 L4.4 3 L0.6 5.5z" fill="none" stroke="#a8a8a8" stroke-width="0.8"/></svg>
<svg class="a" style="left:30px;top:162.75000000000006px" width="11" height="11" viewBox="0 0 11 11"><g transform="scale(0.5)"><rect x="1" y="5" width="20" height="16" fill="#e3a52c"/><rect x="4" y="1" width="12" height="7" fill="#fff" stroke="#333" stroke-width="1.3"/><path d="M6 4h8" stroke="#333" stroke-width="1.2"/><path d="M2 13h18M8 16.5h6" stroke="#9a6510" stroke-width="1.4"/></g></svg>
<div class="a" style="left:42.5px;top:162.90px;line-height:12px;font-size:8.8px;transform:scaleX(0.909);transform-origin:0 0;color:#1a1a1a;-webkit-text-stroke:0.2px #1a1a1a">Categories and Keywords</div>
<svg class="a" style="left:22px;top:178.89999999999998px" width="5" height="6" viewBox="0 0 5 6"><path d="M0.6 0.5 L4.4 3 L0.6 5.5z" fill="none" stroke="#a8a8a8" stroke-width="0.8"/></svg>
<svg class="a" style="left:30px;top:175.8px" width="11" height="11" viewBox="0 0 11 11"><g transform="scale(0.5)"><rect x="1" y="1.5" width="15" height="19" rx="2" fill="#ddd" stroke="#444" stroke-width="1.4"/><rect x="5" y="4" width="16" height="17" rx="2" fill="#c4c4c4" stroke="#444" stroke-width="1.4"/><circle cx="13" cy="12.5" r="3.8" fill="#333"/></g></svg>
<div class="a" style="left:42.5px;top:175.95px;line-height:12px;font-size:8.8px;transform:scaleX(0.909);transform-origin:0 0;color:#1a1a1a;-webkit-text-stroke:0.2px #1a1a1a">Business Process Types</div>
<svg class="a" style="left:9.9px;top:193.35px" width="5" height="5" viewBox="0 0 5 5"><path d="M4.5 0.5 L4.5 4.5 L0.5 4.5z" fill="#333"/></svg>
<svg class="a" style="left:18px;top:189.25px" width="11" height="11" viewBox="0 0 11 11"><g transform="scale(0.5)"><circle cx="11" cy="11" r="10.8" fill="#33628f"/><path d="M4.8 4.6 C7 3.2 10.5 2.6 12.8 3.3 L12.4 6.8 L9.6 8.8 L11.6 11.6 L15 13 L15.9 14.3 L12.6 18.8 L10.8 14.6 L7.4 11.2 L6.9 8 L5.4 6.3 Z" fill="#fff"/></g></svg>
<div class="a" style="left:30.6px;top:189.00px;line-height:12px;font-size:8.8px;transform:scaleX(0.909);transform-origin:0 0;color:#1a1a1a;-webkit-text-stroke:0.2px #1a1a1a">Campaign Site Template (International)</div>
<svg class="a" style="left:21.4px;top:206.4px" width="5" height="5" viewBox="0 0 5 5"><path d="M4.5 0.5 L4.5 4.5 L0.5 4.5z" fill="#333"/></svg>
<svg class="a" style="left:30px;top:202.5px" width="10.5" height="8.5" viewBox="0 0 10.5 8.5"><g transform="scale(0.5)"><path d="M0.8 1 h6.5 l2 2.2 h9.7 v12.3 h-18.2z" fill="#c98e18" stroke="#9a6a0c" stroke-width="1"/><path d="M0.8 15.5 l3.2 -8.5 h16 l-3.2 8.5z" fill="#eaa928" stroke="#9a6a0c" stroke-width="1"/></g></svg>
<div class="a" style="left:42.5px;top:202.05px;line-height:12px;font-size:8.8px;transform:scaleX(0.909);transform-origin:0 0;color:#1a1a1a;-webkit-text-stroke:0.2px #1a1a1a">Building Blocks</div>
<svg class="a" style="left:34px;top:218.04999999999995px" width="5" height="6" viewBox="0 0 5 6"><path d="M0.6 0.5 L4.4 3 L0.6 5.5z" fill="none" stroke="#a8a8a8" stroke-width="0.8"/></svg>
<div class="a" style="left:53px;top:215.44999999999993px;width:45.5px;height:11px;background:#dcdcdc"></div>
<svg class="a" style="left:42px;top:215.54999999999995px" width="10.5" height="8.5" viewBox="0 0 10.5 8.5"><g transform="scale(0.5)"><path d="M0.8 1 h6.5 l2 2.2 h9.7 v12.3 h-18.2z" fill="#c98e18" stroke="#9a6a0c" stroke-width="1"/><path d="M0.8 15.5 l3.2 -8.5 h16 l-3.2 8.5z" fill="#eaa928" stroke="#9a6a0c" stroke-width="1"/></g></svg>
<div class="a" style="left:54px;top:215.10px;line-height:12px;font-size:8.8px;transform:scaleX(0.909);transform-origin:0 0;color:#1a1a1a;-webkit-text-stroke:0.2px #1a1a1a">components</div>
<svg class="a" style="left:34px;top:231.10000000000002px" width="5" height="6" viewBox="0 0 5 6"><path d="M0.6 0.5 L4.4 3 L0.6 5.5z" fill="none" stroke="#a8a8a8" stroke-width="0.8"/></svg>
<svg class="a" style="left:42px;top:228.60000000000002px" width="10.5" height="8.5" viewBox="0 0 10.5 8.5"><g transform="scale(0.5)"><path d="M0.8 1 h6.5 l2 2.2 h9.7 v12.3 h-18.2z" fill="#c98e18" stroke="#9a6a0c" stroke-width="1"/><path d="M0.8 15.5 l3.2 -8.5 h16 l-3.2 8.5z" fill="#eaa928" stroke="#9a6a0c" stroke-width="1"/></g></svg>
<div class="a" style="left:54px;top:228.15px;line-height:12px;font-size:8.8px;transform:scaleX(0.909);transform-origin:0 0;color:#1a1a1a;-webkit-text-stroke:0.2px #1a1a1a">Default Templates</div>
<svg class="a" style="left:34px;top:244.14999999999998px" width="5" height="6" viewBox="0 0 5 6"><path d="M0.6 0.5 L4.4 3 L0.6 5.5z" fill="none" stroke="#a8a8a8" stroke-width="0.8"/></svg>
<svg class="a" style="left:42px;top:241.64999999999998px" width="10.5" height="8.5" viewBox="0 0 10.5 8.5"><g transform="scale(0.5)"><path d="M0.8 1 h6.5 l2 2.2 h9.7 v12.3 h-18.2z" fill="#c98e18" stroke="#9a6a0c" stroke-width="1"/><path d="M0.8 15.5 l3.2 -8.5 h16 l-3.2 8.5z" fill="#eaa928" stroke="#9a6a0c" stroke-width="1"/></g></svg>
<div class="a" style="left:54px;top:241.20px;line-height:12px;font-size:8.8px;transform:scaleX(0.909);transform-origin:0 0;color:#1a1a1a;-webkit-text-stroke:0.2px #1a1a1a">no perm</div>
<svg class="a" style="left:34px;top:257.2px" width="5" height="6" viewBox="0 0 5 6"><path d="M0.6 0.5 L4.4 3 L0.6 5.5z" fill="none" stroke="#a8a8a8" stroke-width="0.8"/></svg>
<svg class="a" style="left:42px;top:254.7px" width="10.5" height="8.5" viewBox="0 0 10.5 8.5"><g transform="scale(0.5)"><path d="M0.8 1 h6.5 l2 2.2 h9.7 v12.3 h-18.2z" fill="#c98e18" stroke="#9a6a0c" stroke-width="1"/><path d="M0.8 15.5 l3.2 -8.5 h16 l-3.2 8.5z" fill="#eaa928" stroke="#9a6a0c" stroke-width="1"/></g></svg>
<div class="a" style="left:54px;top:254.25px;line-height:12px;font-size:8.8px;transform:scaleX(0.909);transform-origin:0 0;color:#1a1a1a;-webkit-text-stroke:0.2px #1a1a1a">schemas</div>
<svg class="a" style="left:34px;top:270.25px" width="5" height="6" viewBox="0 0 5 6"><path d="M0.6 0.5 L4.4 3 L0.6 5.5z" fill="none" stroke="#a8a8a8" stroke-width="0.8"/></svg>
<svg class="a" style="left:42px;top:267.75px" width="10.5" height="8.5" viewBox="0 0 10.5 8.5"><g transform="scale(0.5)"><path d="M0.8 1 h6.5 l2 2.2 h9.7 v12.3 h-18.2z" fill="#c98e18" stroke="#9a6a0c" stroke-width="1"/><path d="M0.8 15.5 l3.2 -8.5 h16 l-3.2 8.5z" fill="#eaa928" stroke="#9a6a0c" stroke-width="1"/></g></svg>
<div class="a" style="left:54px;top:267.30px;line-height:12px;font-size:8.8px;transform:scaleX(0.909);transform-origin:0 0;color:#1a1a1a;-webkit-text-stroke:0.2px #1a1a1a">templates</div>
<svg class="a" style="left:42px;top:280.2px" width="11" height="11" viewBox="0 0 11 11"><g transform="scale(0.5)"><path d="M6 9 v-4 a5 4 0 0 1 10 0 v4" fill="#8a8a8a" stroke="#444" stroke-width="1.3"/><path d="M8.5 6h5M8.5 3.5h5" stroke="#ddd" stroke-width="0.8"/><rect x="1" y="9" width="20" height="5" rx="1" fill="#e6a52c"/><rect x="4" y="14" width="14" height="7" fill="#d4951f"/><path d="M4 17h14" stroke="#a06d12" stroke-width="1"/></g></svg>
<div class="a" style="left:54px;top:280.35px;line-height:12px;font-size:8.8px;transform:scaleX(0.909);transform-origin:0 0;color:#1a1a1a;-webkit-text-stroke:0.2px #1a1a1a">bundle</div>
<svg class="a" style="left:42px;top:293.25000000000006px" width="11" height="11" viewBox="0 0 11 11"><g transform="scale(0.5)"><path d="M6 9 v-4 a5 4 0 0 1 10 0 v4" fill="#8a8a8a" stroke="#444" stroke-width="1.3"/><path d="M8.5 6h5M8.5 3.5h5" stroke="#ddd" stroke-width="0.8"/><rect x="1" y="9" width="20" height="5" rx="1" fill="#e6a52c"/><rect x="4" y="14" width="14" height="7" fill="#d4951f"/><path d="M4 17h14" stroke="#a06d12" stroke-width="1"/></g></svg>
<div class="a" style="left:54px;top:293.40px;line-height:12px;font-size:8.8px;transform:scaleX(0.909);transform-origin:0 0;color:#1a1a1a;-webkit-text-stroke:0.2px #1a1a1a">new wf process def</div>
<svg class="a" style="left:22px;top:309.4px" width="5" height="6" viewBox="0 0 5 6"><path d="M0.6 0.5 L4.4 3 L0.6 5.5z" fill="none" stroke="#a8a8a8" stroke-width="0.8"/></svg>
<svg class="a" style="left:30px;top:306.9px" width="10.5" height="8.5" viewBox="0 0 10.5 8.5"><g transform="scale(0.5)"><path d="M0.8 1 h6.5 l2 2.2 h9.7 v12.3 h-18.2z" fill="#c03a70" stroke="#8a1c48" stroke-width="1"/><path d="M0.8 15.5 l3.2 -8.5 h16 l-3.2 8.5z" fill="#e0508a" stroke="#8a1c48" stroke-width="1"/></g></svg>
<div class="a" style="left:42.5px;top:306.45px;line-height:12px;font-size:8.8px;transform:scaleX(0.909);transform-origin:0 0;color:#1a1a1a;-webkit-text-stroke:0.2px #1a1a1a">sg</div>
<svg class="a" style="left:22px;top:322.45000000000005px" width="5" height="6" viewBox="0 0 5 6"><path d="M0.6 0.5 L4.4 3 L0.6 5.5z" fill="none" stroke="#a8a8a8" stroke-width="0.8"/></svg>
<svg class="a" style="left:30px;top:319.35px" width="11" height="11" viewBox="0 0 11 11"><g transform="scale(0.5)"><rect x="1" y="5" width="20" height="16" fill="#e3a52c"/><rect x="4" y="1" width="12" height="7" fill="#fff" stroke="#333" stroke-width="1.3"/><path d="M6 4h8" stroke="#333" stroke-width="1.2"/><path d="M2 13h18M8 16.5h6" stroke="#9a6510" stroke-width="1.4"/></g></svg>
<div class="a" style="left:42.5px;top:319.50px;line-height:12px;font-size:8.8px;transform:scaleX(0.909);transform-origin:0 0;color:#1a1a1a;-webkit-text-stroke:0.2px #1a1a1a">Categories and Keywords</div>
<svg class="a" style="left:22px;top:335.5px" width="5" height="6" viewBox="0 0 5 6"><path d="M0.6 0.5 L4.4 3 L0.6 5.5z" fill="none" stroke="#a8a8a8" stroke-width="0.8"/></svg>
<svg class="a" style="left:30px;top:332.4px" width="11" height="11" viewBox="0 0 11 11"><g transform="scale(0.5)"><rect x="1" y="1.5" width="15" height="19" rx="2" fill="#ddd" stroke="#444" stroke-width="1.4"/><rect x="5" y="4" width="16" height="17" rx="2" fill="#c4c4c4" stroke="#444" stroke-width="1.4"/><circle cx="13" cy="12.5" r="3.8" fill="#333"/></g></svg>
<div class="a" style="left:42.5px;top:332.55px;line-height:12px;font-size:8.8px;transform:scaleX(0.909);transform-origin:0 0;color:#1a1a1a;-webkit-text-stroke:0.2px #1a1a1a">Business Process Types</div>
<svg class="a" style="left:10.5px;top:348.54999999999995px" width="5" height="6" viewBox="0 0 5 6"><path d="M0.6 0.5 L4.4 3 L0.6 5.5z" fill="none" stroke="#a8a8a8" stroke-width="0.8"/></svg>
<svg class="a" style="left:18px;top:345.85px" width="11" height="11" viewBox="0 0 11 11"><g transform="scale(0.5)"><circle cx="11" cy="11" r="10.8" fill="#33628f"/><path d="M4.8 4.6 C7 3.2 10.5 2.6 12.8 3.3 L12.4 6.8 L9.6 8.8 L11.6 11.6 L15 13 L15.9 14.3 L12.6 18.8 L10.8 14.6 L7.4 11.2 L6.9 8 L5.4 6.3 Z" fill="#fff"/></g></svg>
<div class="a" style="left:30.6px;top:345.60px;line-height:12px;font-size:8.8px;transform:scaleX(0.909);transform-origin:0 0;color:#1a1a1a;-webkit-text-stroke:0.2px #1a1a1a">Corporate Blog English</div>
<svg class="a" style="left:10.5px;top:361.6px" width="5" height="6" viewBox="0 0 5 6"><path d="M0.6 0.5 L4.4 3 L0.6 5.5z" fill="none" stroke="#a8a8a8" stroke-width="0.8"/></svg>
<svg class="a" style="left:18px;top:358.9000000000001px" width="11" height="11" viewBox="0 0 11 11"><g transform="scale(0.5)"><circle cx="11" cy="11" r="10.8" fill="#33628f"/><path d="M4.8 4.6 C7 3.2 10.5 2.6 12.8 3.3 L12.4 6.8 L9.6 8.8 L11.6 11.6 L15 13 L15.9 14.3 L12.6 18.8 L10.8 14.6 L7.4 11.2 L6.9 8 L5.4 6.3 Z" fill="#fff"/></g></svg>
<div class="a" style="left:30.6px;top:358.65px;line-height:12px;font-size:8.8px;transform:scaleX(0.909);transform-origin:0 0;color:#1a1a1a;-webkit-text-stroke:0.2px #1a1a1a">Corporate Web site Dutch</div>
<svg class="a" style="left:10.5px;top:374.65px" width="5" height="6" viewBox="0 0 5 6"><path d="M0.6 0.5 L4.4 3 L0.6 5.5z" fill="none" stroke="#a8a8a8" stroke-width="0.8"/></svg>
<svg class="a" style="left:18px;top:371.95000000000005px" width="11" height="11" viewBox="0 0 11 11"><g transform="scale(0.5)"><circle cx="11" cy="11" r="10.8" fill="#33628f"/><path d="M4.8 4.6 C7 3.2 10.5 2.6 12.8 3.3 L12.4 6.8 L9.6 8.8 L11.6 11.6 L15 13 L15.9 14.3 L12.6 18.8 L10.8 14.6 L7.4 11.2 L6.9 8 L5.4 6.3 Z" fill="#fff"/></g></svg>
<div class="a" style="left:30.6px;top:371.70px;line-height:12px;font-size:8.8px;transform:scaleX(0.909);transform-origin:0 0;color:#1a1a1a;-webkit-text-stroke:0.2px #1a1a1a">Corporate Web site English (Main)</div>
<svg class="a" style="left:10.5px;top:387.70000000000005px" width="5" height="6" viewBox="0 0 5 6"><path d="M0.6 0.5 L4.4 3 L0.6 5.5z" fill="none" stroke="#a8a8a8" stroke-width="0.8"/></svg>
<svg class="a" style="left:18px;top:385.0000000000001px" width="11" height="11" viewBox="0 0 11 11"><g transform="scale(0.5)"><circle cx="11" cy="11" r="10.8" fill="#33628f"/><path d="M4.8 4.6 C7 3.2 10.5 2.6 12.8 3.3 L12.4 6.8 L9.6 8.8 L11.6 11.6 L15 13 L15.9 14.3 L12.6 18.8 L10.8 14.6 L7.4 11.2 L6.9 8 L5.4 6.3 Z" fill="#fff"/></g></svg>
<div class="a" style="left:30.6px;top:384.75px;line-height:12px;font-size:8.8px;transform:scaleX(0.909);transform-origin:0 0;color:#1a1a1a;-webkit-text-stroke:0.2px #1a1a1a">Corporate Web site English UK</div>
<svg class="a" style="left:10.5px;top:400.75px" width="5" height="6" viewBox="0 0 5 6"><path d="M0.6 0.5 L4.4 3 L0.6 5.5z" fill="none" stroke="#a8a8a8" stroke-width="0.8"/></svg>
<svg class="a" style="left:18px;top:398.05000000000007px" width="11" height="11" viewBox="0 0 11 11"><g transform="scale(0.5)"><circle cx="11" cy="11" r="10.8" fill="#33628f"/><path d="M4.8 4.6 C7 3.2 10.5 2.6 12.8 3.3 L12.4 6.8 L9.6 8.8 L11.6 11.6 L15 13 L15.9 14.3 L12.6 18.8 L10.8 14.6 L7.4 11.2 L6.9 8 L5.4 6.3 Z" fill="#fff"/></g></svg>
<div class="a" style="left:30.6px;top:397.80px;line-height:12px;font-size:8.8px;transform:scaleX(0.909);transform-origin:0 0;color:#1a1a1a;-webkit-text-stroke:0.2px #1a1a1a"></div>
</div>
<div class="a" style="left:152.2px;top:98.2px;width:800px;height:569.8px;background:#fff;border:1px solid #a4a4a4;border-radius:2px"></div>
<div class="a" style="left:153.2px;top:99.2px;width:786.8px;height:17px;background:#f4f4f4;border-bottom:1px solid #a0a0a0;border-radius:2px 0 0 0"></div>
<div class="a" style="left:158px;top:102.60px;line-height:12px;font-size:8.25px;color:#111;font-weight:bold;">components</div>
<svg class="a" style="left:210px;top:103px" width="9" height="9" viewBox="0 0 9 9"><path d="M7.5 4.5 a3 3 0 1 1 -1 -2.3" fill="none" stroke="#777" stroke-width="0.9"/><path d="M5.5 0.8 L7.8 2 L6.2 3.8" fill="none" stroke="#777" stroke-width="0.8"/></svg>
<div class="a" style="left:603.7px;top:102.05px;line-height:12px;font-size:8.8px;color:#222;font-weight:normal;transform:scaleX(0.9156);transform-origin:0 0;">Toggle View</div>
<div class="a" style="left:650px;top:103.3px;width:8.5px;height:8.5px;background:#a8a8ae"></div>
<div class="a" style="left:662.5px;top:104px;width:1.5px;height:1.5px;background:#999"></div>
<div class="a" style="left:665.5px;top:104px;width:1.5px;height:1.5px;background:#999"></div>
<div class="a" style="left:668.5px;top:104px;width:1.5px;height:1.5px;background:#999"></div>
<div class="a" style="left:662.5px;top:107px;width:1.5px;height:1.5px;background:#999"></div>
<div class="a" style="left:665.5px;top:107px;width:1.5px;height:1.5px;background:#999"></div>
<div class="a" style="left:668.5px;top:107px;width:1.5px;height:1.5px;background:#999"></div>
<div class="a" style="left:662.5px;top:110px;width:1.5px;height:1.5px;background:#999"></div>
<div class="a" style="left:665.5px;top:110px;width:1.5px;height:1.5px;background:#999"></div>
<div class="a" style="left:668.5px;top:110px;width:1.5px;height:1.5px;background:#999"></div>
<div class="a" style="left:674px;top:103px;width:1px;height:10px;background:#777"></div>
<div class="a" style="left:678.5px;top:102.05px;line-height:12px;font-size:8.8px;color:#222;font-weight:normal;transform:scaleX(0.8787);transform-origin:0 0;">Search</div>
<div class="a" style="left:708px;top:101px;width:89.5px;height:12px;background:#fff;border:1px solid #9a9a9a"></div>
<svg class="a" style="left:710.5px;top:102.2px" width="10.5" height="8.5" viewBox="0 0 10.5 8.5"><g transform="scale(0.5)"><path d="M0.8 1 h6.5 l2 2.2 h9.7 v12.3 h-18.2z" fill="#c98e18" stroke="#9a6a0c" stroke-width="1"/><path d="M0.8 15.5 l3.2 -8.5 h16 l-3.2 8.5z" fill="#eaa928" stroke="#9a6a0c" stroke-width="1"/></g></svg>
<div class="a" style="left:722px;top:102.25px;line-height:12px;font-size:8.8px;color:#222;font-weight:normal;transform:scaleX(0.9179);transform-origin:0 0;">components</div>
<div class="a" style="left:787.3px;top:102px;width:9.7px;height:10px;background:#d0d0d0;border-left:1px solid #aaa"></div>
<svg class="a" style="left:789.6px;top:105.5px" width="5" height="3" viewBox="0 0 5 3"><path d="M0 0 L5 0 L2.5 3z" fill="#222"/></svg>
<div class="a" style="left:802px;top:101px;width:124.6px;height:12px;background:#fff;border:1px solid #9a9a9a"></div>
<div class="a" style="left:806px;top:102.05px;line-height:12px;font-size:8.8px;color:#333;font-weight:normal;transform:scaleX(0.9148);transform-origin:0 0;">Enter a Keyword or URI</div>
<svg class="a" style="left:915px;top:102.5px" width="9" height="9" viewBox="0 0 9 9"><circle cx="5.5" cy="3.5" r="2.8" fill="none" stroke="#333" stroke-width="0.9"/><path d="M3.5 5.5 L0.8 8.2" stroke="#333" stroke-width="1.2"/></svg>
<svg class="a" style="left:931px;top:106px" width="5" height="3" viewBox="0 0 5 3"><path d="M0 0 L5 0 L2.5 3z" fill="#999"/></svg>
<div class="a" style="left:153.2px;top:116.2px;width:786.8px;height:10.8px;background:#efefef;border-bottom:1px solid #a0a0a0"></div>
<div class="a" style="left:165.6px;top:115px;width:1px;height:12px;background:#b5b5b5"></div>
<div class="a" style="left:359.2px;top:115px;width:1px;height:12px;background:#b5b5b5"></div>
<div class="a" style="left:551.6px;top:115px;width:1px;height:12px;background:#b5b5b5"></div>
<div class="a" style="left:745.6px;top:115px;width:1px;height:12px;background:#b5b5b5"></div>
<svg class="a" style="left:348px;top:117.5px" width="8" height="8" viewBox="0 0 8 8"><path d="M0.5 0.5 h7 l-2.8 3.5 v3.5 l-1.4 -1 v-2.5z" fill="none" stroke="#888" stroke-width="0.7"/></svg>
<svg class="a" style="left:540px;top:117.5px" width="8" height="8" viewBox="0 0 8 8"><path d="M0.5 0.5 h7 l-2.8 3.5 v3.5 l-1.4 -1 v-2.5z" fill="none" stroke="#888" stroke-width="0.7"/></svg>
<svg class="a" style="left:734.5px;top:117.5px" width="8" height="8" viewBox="0 0 8 8"><path d="M0.5 0.5 h7 l-2.8 3.5 v3.5 l-1.4 -1 v-2.5z" fill="none" stroke="#888" stroke-width="0.7"/></svg>
<svg class="a" style="left:929px;top:117.5px" width="8" height="8" viewBox="0 0 8 8"><path d="M0.5 0.5 h7 l-2.8 3.5 v3.5 l-1.4 -1 v-2.5z" fill="none" stroke="#888" stroke-width="0.7"/></svg>
<div class="a" style="left:169.5px;top:115.25px;line-height:12px;font-size:8.8px;color:#222;font-weight:normal;transform:scaleX(0.8734);transform-origin:0 0;">Name</div>
<div class="a" style="left:362.8px;top:115.25px;line-height:12px;font-size:8.8px;color:#222;font-weight:normal;transform:scaleX(0.9016);transform-origin:0 0;">Type</div>
<div class="a" style="left:556px;top:115.25px;line-height:12px;font-size:8.8px;color:#222;font-weight:normal;transform:scaleX(0.8936);transform-origin:0 0;">From Publication</div>
<div class="a" style="left:748.8px;top:115.25px;line-height:12px;font-size:8.8px;color:#222;font-weight:normal;transform:scaleX(0.9170);transform-origin:0 0;">Modified</div>
<div class="a" style="left:153.2px;top:139.7px;width:787px;height:1px;background:#e8e8e8"></div>
<svg class="a" style="left:156px;top:127.85px" width="10" height="11" viewBox="0 0 10 11"><path d="M0.6 3 q0 -2.2 2.2 -2.2 h4.6 q2.2 0 2.2 2.2 v6.6 q0 0.8 -0.8 0.8 h-7.4 q-0.8 0 -0.8 -0.8z" fill="#bcc7d4" stroke="#2e3642" stroke-width="1.1"/><path d="M1 2.8 h8.2" stroke="#2e3642" stroke-width="0.7"/></svg>
<div class="a" style="left:167px;top:128.08px;line-height:12px;font-size:9.0px;color:#1a1a1a;font-weight:normal;transform:scaleX(0.9111);transform-origin:0 0;-webkit-text-stroke:0.1px #1a1a1a">1</div>
<div class="a" style="left:360px;top:128.08px;line-height:12px;font-size:9.0px;color:#1a1a1a;font-weight:normal;transform:scaleX(0.8812);transform-origin:0 0;-webkit-text-stroke:0.1px #1a1a1a">Component</div>
<div class="a" style="left:746.4px;top:128.08px;line-height:12px;font-size:9.0px;color:#1a1a1a;font-weight:normal;transform:scaleX(0.9397);transform-origin:0 0;-webkit-text-stroke:0.1px #1a1a1a">9/17/2015 5:19 AM</div>
<div class="a" style="left:153.2px;top:153.39999999999998px;width:787px;height:1px;background:#e8e8e8"></div>
<svg class="a" style="left:156px;top:141.54999999999998px" width="10" height="11" viewBox="0 0 10 11"><path d="M0.6 3 q0 -2.2 2.2 -2.2 h4.6 q2.2 0 2.2 2.2 v6.6 q0 0.8 -0.8 0.8 h-7.4 q-0.8 0 -0.8 -0.8z" fill="#bcc7d4" stroke="#2e3642" stroke-width="1.1"/><path d="M1 2.8 h8.2" stroke="#2e3642" stroke-width="0.7"/></svg>
<div class="a" style="left:167px;top:141.78px;line-height:12px;font-size:9.0px;color:#1a1a1a;font-weight:normal;transform:scaleX(0.9111);transform-origin:0 0;-webkit-text-stroke:0.1px #1a1a1a">cp_link</div>
<div class="a" style="left:360px;top:141.78px;line-height:12px;font-size:9.0px;color:#1a1a1a;font-weight:normal;transform:scaleX(0.8812);transform-origin:0 0;-webkit-text-stroke:0.1px #1a1a1a">Component</div>
<div class="a" style="left:746.4px;top:141.78px;line-height:12px;font-size:9.0px;color:#1a1a1a;font-weight:normal;transform:scaleX(0.9397);transform-origin:0 0;-webkit-text-stroke:0.1px #1a1a1a">9/17/2015 5:40 AM</div>
<div class="a" style="left:153.2px;top:167.1px;width:787px;height:1px;background:#e8e8e8"></div>
<svg class="a" style="left:156px;top:155.25px" width="10" height="11" viewBox="0 0 10 11"><path d="M0.6 3 q0 -2.2 2.2 -2.2 h4.6 q2.2 0 2.2 2.2 v6.6 q0 0.8 -0.8 0.8 h-7.4 q-0.8 0 -0.8 -0.8z" fill="#bcc7d4" stroke="#2e3642" stroke-width="1.1"/><path d="M1 2.8 h8.2" stroke="#2e3642" stroke-width="0.7"/></svg>
<svg class="a" style="left:160px;top:161.25px" width="6" height="5" viewBox="0 0 6 5"><rect x="0.5" y="1.5" width="4" height="3" fill="#fff" stroke="#333" stroke-width="0.8"/><path d="M1.5 1.5 v-0.5 a1 1 0 0 1 2 0 v0.5" fill="none" stroke="#333" stroke-width="0.7"/></svg>
<div class="a" style="left:167px;top:155.48px;line-height:12px;font-size:9.0px;color:#1a1a1a;font-weight:normal;transform:scaleX(0.9111);transform-origin:0 0;-webkit-text-stroke:0.1px #1a1a1a">FA</div>
<div class="a" style="left:360px;top:155.48px;line-height:12px;font-size:9.0px;color:#1a1a1a;font-weight:normal;transform:scaleX(0.8812);transform-origin:0 0;-webkit-text-stroke:0.1px #1a1a1a">Component</div>
<div class="a" style="left:746.4px;top:155.48px;line-height:12px;font-size:9.0px;color:#1a1a1a;font-weight:normal;transform:scaleX(0.9397);transform-origin:0 0;-webkit-text-stroke:0.1px #1a1a1a">9/18/2015 4:07 AM</div>
<div class="a" style="left:153.2px;top:180.79999999999998px;width:787px;height:1px;background:#e8e8e8"></div>
<svg class="a" style="left:156px;top:168.95px" width="10" height="11" viewBox="0 0 10 11"><path d="M0.6 3 q0 -2.2 2.2 -2.2 h4.6 q2.2 0 2.2 2.2 v6.6 q0 0.8 -0.8 0.8 h-7.4 q-0.8 0 -0.8 -0.8z" fill="#bcc7d4" stroke="#2e3642" stroke-width="1.1"/><path d="M1 2.8 h8.2" stroke="#2e3642" stroke-width="0.7"/></svg>
<div class="a" style="left:167px;top:169.18px;line-height:12px;font-size:9.0px;color:#1a1a1a;font-weight:normal;transform:scaleX(0.9111);transform-origin:0 0;-webkit-text-stroke:0.1px #1a1a1a">for FA</div>
<div class="a" style="left:360px;top:169.18px;line-height:12px;font-size:9.0px;color:#1a1a1a;font-weight:normal;transform:scaleX(0.8812);transform-origin:0 0;-webkit-text-stroke:0.1px #1a1a1a">Component</div>
<div class="a" style="left:746.4px;top:169.18px;line-height:12px;font-size:9.0px;color:#1a1a1a;font-weight:normal;transform:scaleX(0.9397);transform-origin:0 0;-webkit-text-stroke:0.1px #1a1a1a">9/18/2015 4:02 AM</div>
<div class="a" style="left:153px;top:181.3px;width:787px;height:13.7px;background:#d4d4d4"></div>
<div class="a" style="left:153.2px;top:194.5px;width:787px;height:1px;background:#e8e8e8"></div>
<svg class="a" style="left:156px;top:182.65px" width="10" height="11" viewBox="0 0 10 11"><path d="M0.6 3 q0 -2.2 2.2 -2.2 h4.6 q2.2 0 2.2 2.2 v6.6 q0 0.8 -0.8 0.8 h-7.4 q-0.8 0 -0.8 -0.8z" fill="#bcc7d4" stroke="#2e3642" stroke-width="1.1"/><path d="M1 2.8 h8.2" stroke="#2e3642" stroke-width="0.7"/></svg>
<div class="a" style="left:167px;top:182.88px;line-height:12px;font-size:9.0px;color:#1a1a1a;font-weight:normal;transform:scaleX(0.9111);transform-origin:0 0;-webkit-text-stroke:0.1px #1a1a1a">linked to for FA</div>
<div class="a" style="left:360px;top:182.88px;line-height:12px;font-size:9.0px;color:#1a1a1a;font-weight:normal;transform:scaleX(0.8812);transform-origin:0 0;-webkit-text-stroke:0.1px #1a1a1a">Component</div>
<div class="a" style="left:746.4px;top:182.88px;line-height:12px;font-size:9.0px;color:#1a1a1a;font-weight:normal;transform:scaleX(0.9397);transform-origin:0 0;-webkit-text-stroke:0.1px #1a1a1a">9/18/2015 4:06 AM</div>
<div class="a" style="left:153.2px;top:208.2px;width:787px;height:1px;background:#e8e8e8"></div>
<svg class="a" style="left:156px;top:196.35px" width="10" height="11" viewBox="0 0 10 11"><path d="M0.6 3 q0 -2.2 2.2 -2.2 h4.6 q2.2 0 2.2 2.2 v6.6 q0 0.8 -0.8 0.8 h-7.4 q-0.8 0 -0.8 -0.8z" fill="#bcc7d4" stroke="#2e3642" stroke-width="1.1"/><path d="M1 2.8 h8.2" stroke="#2e3642" stroke-width="0.7"/></svg>
<svg class="a" style="left:160px;top:202.35px" width="6" height="5" viewBox="0 0 6 5"><rect x="0.5" y="1.5" width="4" height="3" fill="#fff" stroke="#333" stroke-width="0.8"/><path d="M1.5 1.5 v-0.5 a1 1 0 0 1 2 0 v0.5" fill="none" stroke="#333" stroke-width="0.7"/></svg>
<div class="a" style="left:167px;top:196.58px;line-height:12px;font-size:9.0px;color:#1a1a1a;font-weight:normal;transform:scaleX(0.9111);transform-origin:0 0;-webkit-text-stroke:0.1px #1a1a1a">text</div>
<div class="a" style="left:360px;top:196.58px;line-height:12px;font-size:9.0px;color:#1a1a1a;font-weight:normal;transform:scaleX(0.8812);transform-origin:0 0;-webkit-text-stroke:0.1px #1a1a1a">Component</div>
<div class="a" style="left:746.4px;top:196.58px;line-height:12px;font-size:9.0px;color:#1a1a1a;font-weight:normal;transform:scaleX(0.9481);transform-origin:0 0;-webkit-text-stroke:0.1px #1a1a1a">9/11/2015 8:34 AM</div>
<div class="a" style="left:153.2px;top:221.89999999999998px;width:787px;height:1px;background:#e8e8e8"></div>
<svg class="a" style="left:156px;top:210.04999999999998px" width="10" height="11" viewBox="0 0 10 11"><path d="M0.6 3 q0 -2.2 2.2 -2.2 h4.6 q2.2 0 2.2 2.2 v6.6 q0 0.8 -0.8 0.8 h-7.4 q-0.8 0 -0.8 -0.8z" fill="#bcc7d4" stroke="#2e3642" stroke-width="1.1"/><path d="M1 2.8 h8.2" stroke="#2e3642" stroke-width="0.7"/></svg>
<div class="a" style="left:167px;top:210.28px;line-height:12px;font-size:9.0px;color:#1a1a1a;font-weight:normal;transform:scaleX(0.9111);transform-origin:0 0;-webkit-text-stroke:0.1px #1a1a1a">third level link</div>
<div class="a" style="left:360px;top:210.28px;line-height:12px;font-size:9.0px;color:#1a1a1a;font-weight:normal;transform:scaleX(0.8812);transform-origin:0 0;-webkit-text-stroke:0.1px #1a1a1a">Component</div>
<div class="a" style="left:746.4px;top:210.28px;line-height:12px;font-size:9.0px;color:#1a1a1a;font-weight:normal;transform:scaleX(0.9397);transform-origin:0 0;-webkit-text-stroke:0.1px #1a1a1a">9/17/2015 5:38 AM</div>
<div class="a" style="left:0;top:20px;width:940px;height:648px;background:rgba(0,0,0,0.5)"></div>
<div class="a" style="left:0;top:0;width:940px;height:20px;background:#212326;border-top:1px solid #1b1d20"></div>
<div class="a" style="left:0px;top:1px;width:940px;height:1px;background:#2b2e32"></div>
<div class="a" style="left:0px;top:0px;width:21px;height:20px;background:#464b53"></div>
<div class="a" style="left:0px;top:1px;width:21px;height:1px;background:#5a6068"></div>
<div class="a" style="left:5px;top:6.5px;width:10.3px;height:1.7px;background:#f4f4f4"></div>
<div class="a" style="left:5px;top:9.7px;width:10.3px;height:1.7px;background:#f4f4f4"></div>
<div class="a" style="left:5px;top:12.9px;width:10.3px;height:1.7px;background:#f4f4f4"></div>
<div class="a" style="left:39.4px;top:4.60px;line-height:12px;font-size:7.84px;color:#c4c4c4;font-weight:normal;letter-spacing:-0.004px;-webkit-text-stroke:0.2px #c4c4c4">Home</div>
<div class="a" style="left:73.1px;top:4.60px;line-height:12px;font-size:8.0px;color:#c4c4c4;font-weight:normal;letter-spacing:0.018px;-webkit-text-stroke:0.2px #c4c4c4">Create</div>
<div class="a" style="left:110px;top:4.60px;line-height:12px;font-size:8.0px;color:#c4c4c4;font-weight:normal;letter-spacing:0.006px;-webkit-text-stroke:0.2px #c4c4c4">Organize</div>
<div class="a" style="left:155px;top:4.60px;line-height:12px;font-size:8.0px;color:#c4c4c4;font-weight:normal;letter-spacing:0.036px;-webkit-text-stroke:0.2px #c4c4c4">Workflow</div>
<div class="a" style="left:201.7px;top:4.60px;line-height:12px;font-size:8.0px;color:#c4c4c4;font-weight:normal;letter-spacing:0.124px;-webkit-text-stroke:0.2px #c4c4c4">Administration</div>
<svg class="a" style="left:46px;top:16.5px" width="9" height="4" viewBox="0 0 9 4"><path d="M0 4 L4.5 0 L9 4z" fill="#767676"/></svg>
<div class="a" style="left:656.6px;top:5.10px;line-height:12px;font-size:8.2px;color:#a8a8a8;font-weight:normal;-webkit-text-stroke:0.15px #a8a8a8">Tridion Content Management Administr...</div>
<svg class="a" style="left:810.8px;top:3.5px" width="13" height="13" viewBox="0 0 13 13"><rect x="0" y="0" width="13" height="13" fill="#4f5a6b"/><circle cx="6.5" cy="5" r="2.8" fill="#b5bcc6"/><path d="M1.5 13 q5 -8 10 0z" fill="#b5bcc6"/></svg>
<svg class="a" style="left:827.0px;top:8.5px" width="5" height="3" viewBox="0 0 5 3"><path d="M0 0 L5 0 L2.5 3z" fill="#b0b0b0"/></svg>
<div class="a" style="left:838.5px;top:2px;width:1px;height:16px;background:#34373c"></div>
<svg class="a" style="left:846.5px;top:3.5px" width="11" height="12" viewBox="0 0 11 12"><path d="M1 0.5 L3 11.5" stroke="#aaa" stroke-width="0.8"/><path d="M1 1 q3 -0.5 5 1 q2 1 4 0.5 l-3 3 l0.5 3 q-2 -0.5 -4 -1 q-1 0 -2 0.5" fill="none" stroke="#aaa" stroke-width="0.8"/></svg>
<div class="a" style="left:862.8px;top:4px;width:12.7px;height:13px;background:#1a1c1f"></div>
<div class="a" style="left:866.2px;top:5.30px;line-height:12px;font-size:9px;color:#8c98a8;font-weight:normal;">0</div>
<svg class="a" style="left:879.1px;top:8.5px" width="5" height="3" viewBox="0 0 5 3"><path d="M0 0 L5 0 L2.5 3z" fill="#b0b0b0"/></svg>
<div class="a" style="left:890.6px;top:2px;width:1px;height:16px;background:#34373c"></div>
<svg class="a" style="left:899px;top:3px" width="10" height="12" viewBox="0 0 10 12"><rect x="0.5" y="1.5" width="9" height="10" fill="#5b5e62" stroke="#77797c" stroke-width="0.6"/><rect x="3" y="0.3" width="4" height="2" fill="#77797c"/><path d="M2.5 5h5M2.5 7h5M2.5 9h5M5 4v6" stroke="#3a3c3f" stroke-width="0.6"/></svg>
<div class="a" style="left:913px;top:4px;width:12.7px;height:13px;background:#1a1c1f"></div>
<div class="a" style="left:916.5px;top:5.30px;line-height:12px;font-size:9px;color:#8c98a8;font-weight:normal;">1</div>
<svg class="a" style="left:928.5px;top:8.5px" width="5" height="3" viewBox="0 0 5 3"><path d="M0 0 L5 0 L2.5 3z" fill="#b0b0b0"/></svg>
<div class="a" style="left:307px;top:278px;width:326.5px;height:112px;background:linear-gradient(#ffffff,#f3f4f7 40%,#dfe3ea);border-radius:3px;box-shadow:0 1px 3px rgba(0,0,0,0.35)"></div>
<svg class="a" style="left:314px;top:288.2px" width="20" height="20" viewBox="0 0 20 20"><circle cx="10" cy="10" r="9.8" fill="#3b6291"/><path d="M6.5 7.6 a3.5 3.4 0 1 1 5.4 2.8 q-1.9 1 -1.9 2.5 v0.5" fill="none" stroke="#fff" stroke-width="2.6"/><circle cx="10" cy="16" r="1.55" fill="#fff"/></svg>
<div class="a" style="left:342.5px;top:291.00px;line-height:12px;font-size:11.56px;color:#2f73d6;font-weight:normal;-webkit-text-stroke:0.25px #2f73d6">Select a Publication</div>
<div class="a" style="left:342.2px;top:318.40px;line-height:12px;font-size:9.1px;color:#262626;font-weight:normal;transform:scaleX(0.91);transform-origin:0 0;-webkit-text-stroke:0.2px #262626">Select to which Publication you want to demote the item linked to for FA.</div>
<div class="a" style="left:560px;top:366px;width:66px;height:18px;background:linear-gradient(#fafafa,#e6e6e6);border:1px solid #a9a9a9;border-radius:2px"></div>
<div class="a" style="left:342.1px;top:335.2px;width:283.2px;height:17.8px;background:#fff;border:1px solid #8c8c8c;border-top-color:#6f6f6f;border-radius:2px;box-shadow:inset 0 1px 1px rgba(0,0,0,0.12)"></div>
<div class="a" style="left:346px;top:339.40px;line-height:12px;font-size:8.4px;color:#222;font-weight:normal;letter-spacing:-0.310px;">Campaign Site Product X</div>
<svg class="a" style="left:613.2px;top:341.9px" width="6" height="4" viewBox="0 0 6 4"><path d="M0 0 L6 0 L3 3.5z" fill="#111"/></svg>
<div class="a" style="left:342.4px;top:352.6px;width:283.2px;height:1.8px;background:#8a8a8a"></div>
<div class="a" style="left:342.4px;top:354.3px;width:283.2px;height:107px;background:#fff;border:1px solid #8a8a8a;border-top:none;border-bottom-color:#555;box-shadow:0 0.5px 1.5px rgba(0,0,0,0.3)"></div>
<div class="a" style="left:343.6px;top:408.3px;width:281.6px;height:16.7px;background:#bcd0ee;border:1px solid #a9c0e6"></div>
<div class="a" style="left:347.4px;top:358.90px;line-height:12px;font-size:8.4px;color:#222;font-weight:normal;letter-spacing:-0.272px;">Select a Publication</div>
<div class="a" style="left:347.4px;top:376.40px;line-height:12px;font-size:8.4px;color:#222;font-weight:normal;letter-spacing:-0.279px;">Corporate Web site English (Main)</div>
<div class="a" style="left:347.4px;top:393.90px;line-height:12px;font-size:8.4px;color:#222;font-weight:normal;letter-spacing:-0.290px;">Corporate Web site Dutch</div>
<div class="a" style="left:347.4px;top:411.40px;line-height:12px;font-size:8.4px;color:#222;font-weight:normal;letter-spacing:-0.296px;">Campaign Site Product X</div>
<div class="a" style="left:347.4px;top:428.90px;line-height:12px;font-size:8.4px;color:#222;font-weight:normal;letter-spacing:-0.284px;">Corporate Blog English</div>
<div class="a" style="left:347.4px;top:446.40px;line-height:12px;font-size:8.4px;color:#222;font-weight:normal;letter-spacing:-0.293px;">Campaign Site Product X German</div>
</body></html>
